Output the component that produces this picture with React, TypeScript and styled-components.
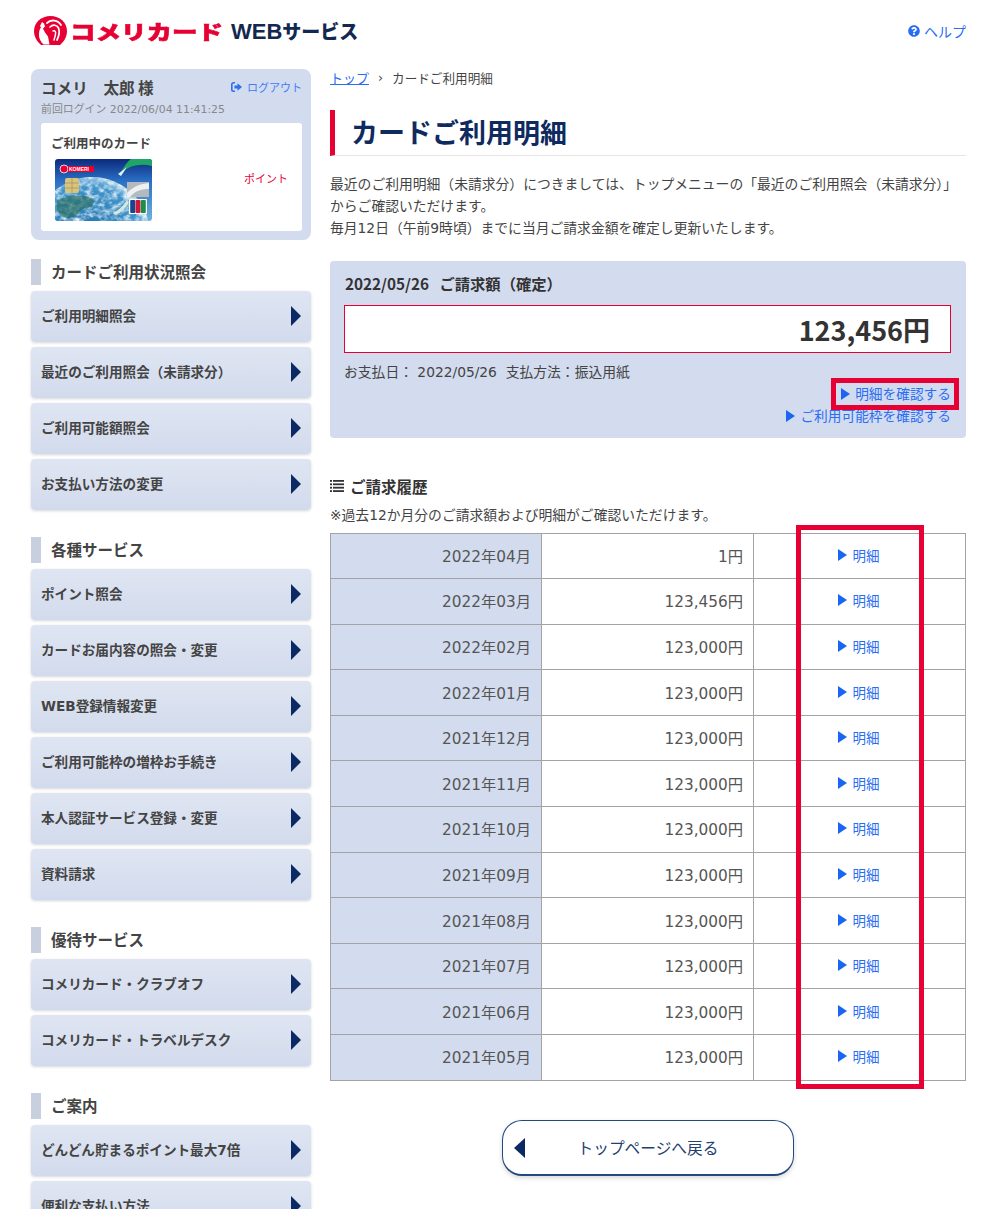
import { createGlobalStyle, styled } from 'styled-components';
import { FaQuestionCircle } from 'react-icons/fa';

const GlobalStyle = createGlobalStyle`
  html, body {
    margin: 0;
    padding: 0;
    background: #fff;
    color: #444;
    font-family: "DejaVu Sans", "Noto Sans CJK JP", sans-serif;
    font-size: 13px;
  }
  * {
    box-sizing: border-box;
  }
`;

const Page = styled.div`
  position: relative;
  width: 1000px;
  height: 1209px;
  overflow: hidden;
  padding: 0 34px 0 31px;
`;

const Header = styled.header`
  display: flex;
  align-items: center;
  justify-content: space-between;
  height: 69px;
  padding: 0 0 7px 3px;
`;

const Logo = styled.div`
  display: flex;
  align-items: center;
  font-family: "Noto Sans CJK JP", sans-serif;
`;

const LogoMain = styled.span`
  display: inline-block;
  margin-left: 3px;
  color: #e60033;
  font-size: 25.500px;
  font-weight: 900;
  line-height: 32px;
  -webkit-text-stroke: 0.7px #e60033;
  transform: scaleY(0.78);
`;

const LogoSub = styled.span`
  margin-left: 8px;
  color: #14284f;
  font-family: "Liberation Sans", sans-serif;
  font-size: 22px;
  font-weight: 700;
  line-height: 32px;
`;

const LogoKana = styled.span`
  font-family: "Noto Sans CJK JP", sans-serif;
  font-size: 19px;
  font-weight: 900;
`;

const HelpLink = styled.a`
  display: flex;
  align-items: center;
  gap: 4px;
  color: #2a6df5;
  font-size: 14px;
  svg {
    font-size: 12px;
  }
`;

const Columns = styled.div`
  display: grid;
  grid-template-columns: 280px 636px;
  gap: 19px;
  align-items: start;
`;

const Sidebar = styled.aside`
  display: flex;
  flex-direction: column;
`;

const UserBox = styled.div`
  height: 171px;
  margin-bottom: 19px;
  padding: 8px 9px 9px 10px;
  background: #d3dcee;
  border-radius: 8px;
`;

const UserRow = styled.div`
  display: flex;
  align-items: center;
  justify-content: space-between;
  height: 20px;
`;

const UserName = styled.span`
  font-family: "Noto Sans CJK JP", sans-serif;
  font-size: 15.600px;
  font-weight: 700;
  color: #444;
  white-space: pre;
`;

const Logout = styled.a`
  display: flex;
  align-items: center;
  gap: 5px;
  color: #3f7cf6;
  font-size: 11px;
`;

const LastLogin = styled.div`
  margin-top: 5px;
  color: #888;
  font-size: 10.900px;
  line-height: 16px;
`;

const CardPanel = styled.div`
  height: 108px;
  margin-top: 5px;
  padding: 12px 10px;
  background: #fff;
  border-radius: 3px;
`;

const CardTitle = styled.div`
  color: #444;
  font-size: 12.500px;
  font-weight: 700;
  line-height: 17px;
`;

const CardRow = styled.div`
  display: flex;
  align-items: center;
  justify-content: space-between;
  margin-top: 7px;
  padding: 0 4px;
`;

const Points = styled.span`
  margin-top: -25px;
  color: #e60033;
  font-size: 11px;
  font-weight: 400;
`;

const Section = styled.section`
  margin-bottom: 27.500px;
`;

const SectionTitle = styled.h2`
  display: flex;
  align-items: center;
  height: 26px;
  margin: 0 0 5.500px;
  padding: 0 0 2px 10px;
  border-left: 10px solid #c8cfde;
  color: #444;
  font-size: 15.500px;
  font-weight: 700;
`;

const NavList = styled.div`
  display: flex;
  flex-direction: column;
  gap: 5px;
`;

const NavItem = styled.a`
  display: flex;
  align-items: center;
  justify-content: space-between;
  height: 51px;
  padding: 0 10px 2px;
  background: linear-gradient(#dfe5f2, #d2dbed);
  border-radius: 4px;
  box-shadow: 0 1px 3px rgba(0, 0, 0, 0.16);
  color: #444;
  font-size: 13.600px;
  font-weight: 700;
`;

const NavArrow = styled.span`
  width: 0;
  height: 0;
  margin-top: 2px;
  border-left: 10px solid #0b2a63;
  border-top: 10px solid transparent;
  border-bottom: 10px solid transparent;
`;

const Main = styled.main`
  display: flex;
  flex-direction: column;
`;

const Breadcrumb = styled.nav`
  display: flex;
  align-items: center;
  gap: 9px;
  height: 20px;
  margin-top: -2px;
  color: #444;
  font-size: 12.600px;
  a {
    color: #2a6df5;
    text-decoration: underline;
    font-size: 13px;
  }
`;

const PageTitle = styled.h1`
  display: flex;
  align-items: center;
  height: 46px;
  margin: 23px 0 0;
  padding: 0 0 2px 16px;
  border-left: 5px solid #e60033;
  border-bottom: 1px solid #e5e5e5;
  color: #0f2a5f;
  font-family: "Noto Sans CJK JP", sans-serif;
  font-size: 27px;
  font-weight: 700;
`;

const Intro = styled.p`
  margin: 17px 0 0;
  color: #444;
  font-size: 13.800px;
  line-height: 22px;
`;

const BillBox = styled.div`
  display: flex;
  flex-direction: column;
  height: 177px;
  margin-top: 21.500px;
  padding: 12px 15px 12px 14px;
  background: #d3dcee;
  border-radius: 4px;
`;

const BillTitle = styled.div`
  padding-left: 1px;
  color: #333;
  font-family: "Noto Sans CJK JP", sans-serif;
  font-size: 15.300px;
  font-weight: 700;
  line-height: 20px;
  white-space: pre;
`;

const Amount = styled.div`
  height: 48px;
  margin-top: 12px;
  padding-right: 20px;
  background: #fff;
  border: 1px solid #e60033;
  color: #333;
  font-family: "Noto Sans CJK JP", sans-serif;
  font-size: 27px;
  font-weight: 700;
  line-height: 48px;
  text-align: right;
`;

const PayInfo = styled.div`
  margin-top: 10px;
  color: #444;
  font-size: 13.800px;
  line-height: 18px;
  white-space: pre;
`;

const BillLink = styled.a`
  display: flex;
  align-items: center;
  justify-content: flex-end;
  gap: 5px;
  margin-top: 4px;
  color: #2a6df5;
  font-size: 13.700px;
  line-height: 18px;
`;

const LinkArrow = styled.span`
  width: 0;
  height: 0;
  border-left: 9px solid #1a66f2;
  border-top: 6px solid transparent;
  border-bottom: 6px solid transparent;
`;

const HistoryTitle = styled.h3`
  display: flex;
  align-items: center;
  gap: 6px;
  height: 20px;
  margin: 38px 0 0;
  color: #333;
  font-family: "Noto Sans CJK JP", sans-serif;
  font-size: 15.500px;
  font-weight: 700;
`;

const Note = styled.p`
  margin: 10px 0 0;
  color: #444;
  font-size: 13.800px;
  line-height: 18px;
`;

const HistoryTable = styled.table`
  width: 636px;
  margin-top: 9px;
  border-collapse: collapse;
  table-layout: fixed;
`;

const Row = styled.tr`
  height: 45.600px;
`;

const MonthCell = styled.td`
  width: 211px;
  padding: 0 10px 2px;
  background: #d3dcee;
  border: 1px solid #a3a3a3;
  color: #555;
  font-size: 15.300px;
  text-align: right;
`;

const PriceCell = styled.td`
  width: 212px;
  padding: 0 10px 2px;
  border: 1px solid #a3a3a3;
  color: #555;
  font-size: 15.300px;
  text-align: right;
`;

const DetailCell = styled.td`
  border: 1px solid #a3a3a3;
`;

const DetailLink = styled.a`
  display: flex;
  align-items: center;
  justify-content: center;
  gap: 6px;
  margin: -2px 0 0 -2px;
  color: #2a6df5;
  font-size: 13.500px;
`;

const BackButton = styled.a`
  position: relative;
  display: flex;
  align-items: center;
  justify-content: center;
  width: 292px;
  height: 56px;
  margin: 39px 0 0 172px;
  background: #fff;
  border: 1px solid #23477f;
  border-bottom-width: 2px;
  border-radius: 20px;
  box-shadow: 0 2px 5px rgba(0, 0, 0, 0.16);
  color: #23406f;
  font-size: 15.700px;
`;

const BackArrow = styled.span`
  position: absolute;
  left: 11px;
  top: 17px;
  width: 0;
  height: 0;
  border-right: 11px solid #0b2a63;
  border-top: 10px solid transparent;
  border-bottom: 10px solid transparent;
`;

const Highlight = styled.div<{ $x: number; $y: number; $w: number; $h: number }>`
  position: absolute;
  left: ${(p) => p.$x}px;
  top: ${(p) => p.$y}px;
  width: ${(p) => p.$w}px;
  height: ${(p) => p.$h}px;
  border: 5px solid #e60033;
  pointer-events: none;
`;

const LogoMark = () => (
  <svg width="33" height="30" viewBox="0 0 33 30">
    <path d="M16.500 0C7.400 0 0 6.500 0 15c0 5.500 2.800 10.500 7 14h19c4.200-3.500 7-8.500 7-14C33 6.500 25.600 0 16.500 0z" fill="#e60033" />
    <path d="M8 6l2 1.500 1 3-2 2 2 4 3 4 1.500 8H9.500c-3-3-5-6.500-4.500-11 .2-3 1-5 2-6L6 10z" fill="#fff" />
    <g fill="none" stroke="#fff" strokeLinecap="round">
      <path d="M13 7c4-4 11-3 14 2" strokeWidth="1.800" />
      <path d="M16 11c3-3 7-2 8.500 1 1.500 4 .5 8-1.500 12" strokeWidth="1.700" />
      <path d="M19 15c2-1 3 1 2.500 3-.3 2-.8 4-1.500 6" strokeWidth="1.500" />
    </g>
  </svg>
);

const LogoutIcon = () => (
  <svg width="11" height="10" viewBox="0 0 11 10">
    <path d="M4 .8H2.500A1.700 1.700 0 0 0 .8 2.500v5A1.700 1.700 0 0 0 2.500 9.200H4" fill="none" stroke="#2f6ff0" strokeWidth="1.600" />
    <path d="M3.500 3.500h3V1.200L11 5 6.500 8.800V6.500h-3z" fill="#2f6ff0" />
  </svg>
);

const ListIcon = () => (
  <svg width="14" height="12" viewBox="0 0 14 12" fill="#333">
    <rect x="0" y="0" width="2" height="1.800" />
    <rect x="3" y="0" width="11" height="1.800" />
    <rect x="0" y="3.400" width="2" height="1.800" />
    <rect x="3" y="3.400" width="11" height="1.800" />
    <rect x="0" y="6.800" width="2" height="1.800" />
    <rect x="3" y="6.800" width="11" height="1.800" />
    <rect x="0" y="10.200" width="2" height="1.800" />
    <rect x="3" y="10.200" width="11" height="1.800" />
  </svg>
);

const CardImage = () => (
  <svg width="97" height="62" viewBox="0 0 97 62">
    <defs>
      <linearGradient id="cardSky" x1="0" y1="0" x2="0" y2="1">
        <stop offset="0" stopColor="#0b2a7c" />
        <stop offset="0.35" stopColor="#2a6fc4" />
        <stop offset="1" stopColor="#6fb3dd" />
      </linearGradient>
      <radialGradient id="cardGlobe" cx="0.45" cy="0.55" r="0.6">
        <stop offset="0" stopColor="#1d6ea8" />
        <stop offset="0.8" stopColor="#3f94cc" />
        <stop offset="1" stopColor="#d7ecf5" />
      </radialGradient>
      <filter id="cardClouds" x="0" y="0" width="100%" height="100%">
        <feTurbulence type="fractalNoise" baseFrequency="0.16 0.22" numOctaves="3" seed="7" />
        <feColorMatrix values="0 0 0 0 1 0 0 0 0 1 0 0 0 0 1 1.900 0 0 0 -0.720" />
        <feComposite in2="SourceGraphic" operator="in" />
      </filter>
      <clipPath id="cardClip">
        <rect width="97" height="62" rx="3" />
      </clipPath>
    </defs>
    <g clipPath="url(#cardClip)">
      <rect width="97" height="62" fill="url(#cardSky)" />
      <path d="M66 13C70 6 73 2 76 0h21v7C86 4 76 6 66 13z" fill="#1fa565" />
      <path d="M63 15l9-7-6 9z" fill="#dff3fb" />
      <circle cx="37" cy="76" r="58" fill="url(#cardGlobe)" />
      <circle cx="37" cy="76" r="58" fill="#fff" filter="url(#cardClouds)" />
      <path d="M2 42c10-6 24-7 34-3 6 3 2 9-5 10-9 2-6 9-18 10-8 0-13-9-11-17z" fill="#2b6f5f" opacity="0.65" />
      <path d="M58 54c6-3 10-7 14-13l2 2c-3 6-8 11-14 13z" fill="#d4e9dc" />
      <rect x="10" y="19" width="14" height="15" rx="2" fill="#d9c47f" />
      <path d="M10 24h14M10 29h14M17 19v15" stroke="#a58f4f" strokeWidth="0.700" />
      <rect x="72" y="23" width="22" height="15" fill="#b4b9bd" />
      <path d="M72 34c7-7 13-9 22-10v6c-8 0-14 2-19 8h-3z" fill="#eef1f3" />
      <rect x="74" y="40" width="18" height="15" rx="1" fill="#fff" />
      <rect x="75.200" y="41" width="5" height="13" rx="1" fill="#15478f" />
      <rect x="80.500" y="41" width="5" height="13" rx="1" fill="#d3163c" />
      <rect x="85.800" y="41" width="5" height="13" rx="1" fill="#1b8f43" />
      <circle cx="9" cy="10" r="4" fill="#e60033" stroke="#fff" strokeWidth="0.800" />
      <rect x="13" y="7" width="26" height="6" fill="#e60033" />
      <text x="14" y="11.800" fontSize="5" fontWeight="700" fill="#fff" fontFamily="Liberation Sans, sans-serif">
        KOMERI
      </text>
    </g>
  </svg>
);

const NAV_SECTIONS = [
  {
    title: 'カードご利用状況照会',
    items: ['ご利用明細照会', '最近のご利用照会（未請求分）', 'ご利用可能額照会', 'お支払い方法の変更'],
  },
  {
    title: '各種サービス',
    items: [
      'ポイント照会',
      'カードお届内容の照会・変更',
      'WEB登録情報変更',
      'ご利用可能枠の増枠お手続き',
      '本人認証サービス登録・変更',
      '資料請求',
    ],
  },
  {
    title: '優待サービス',
    items: ['コメリカード・クラブオフ', 'コメリカード・トラベルデスク'],
  },
  {
    title: 'ご案内',
    items: ['どんどん貯まるポイント最大7倍', '便利な支払い方法'],
  },
];

const HISTORY = [
  ['2022年04月', '1円'],
  ['2022年03月', '123,456円'],
  ['2022年02月', '123,000円'],
  ['2022年01月', '123,000円'],
  ['2021年12月', '123,000円'],
  ['2021年11月', '123,000円'],
  ['2021年10月', '123,000円'],
  ['2021年09月', '123,000円'],
  ['2021年08月', '123,000円'],
  ['2021年07月', '123,000円'],
  ['2021年06月', '123,000円'],
  ['2021年05月', '123,000円'],
];

const App = () => {
  return (
    <Page>
      <GlobalStyle />
      <Header>
        <Logo>
          <LogoMark />
          <LogoMain>コメリカード</LogoMain>
          <LogoSub>
            WEB<LogoKana>サービス</LogoKana>
          </LogoSub>
        </Logo>
        <HelpLink>
          <FaQuestionCircle />
          ヘルプ
        </HelpLink>
      </Header>
      <Columns>
        <Sidebar>
          <UserBox>
            <UserRow>
              <UserName>コメリ　太郎 様</UserName>
              <Logout>
                <LogoutIcon />
                ログアウト
              </Logout>
            </UserRow>
            <LastLogin>前回ログイン 2022/06/04 11:41:25</LastLogin>
            <CardPanel>
              <CardTitle>ご利用中のカード</CardTitle>
              <CardRow>
                <CardImage />
                <Points>ポイント</Points>
              </CardRow>
            </CardPanel>
          </UserBox>
          {NAV_SECTIONS.map((section) => (
            <Section key={section.title}>
              <SectionTitle>{section.title}</SectionTitle>
              <NavList>
                {section.items.map((item) => (
                  <NavItem key={item}>
                    {item}
                    <NavArrow />
                  </NavItem>
                ))}
              </NavList>
            </Section>
          ))}
        </Sidebar>
        <Main>
          <Breadcrumb>
            <a>トップ</a>
            <span>›</span>
            <span>カードご利用明細</span>
          </Breadcrumb>
          <PageTitle>カードご利用明細</PageTitle>
          <Intro>
            最近のご利用明細（未請求分）につきましては、トップメニューの「最近のご利用照会（未請求分）」
            <br />
            からご確認いただけます。
            <br />
            毎月12日（午前9時頃）までに当月ご請求金額を確定し更新いたします。
          </Intro>
          <BillBox>
            <BillTitle>2022/05/26   ご請求額（確定）</BillTitle>
            <Amount>123,456円</Amount>
            <PayInfo>お支払日： 2022/05/26  支払方法：振込用紙</PayInfo>
            <BillLink>
              <LinkArrow />
              明細を確認する
            </BillLink>
            <BillLink>
              <LinkArrow />
              ご利用可能枠を確認する
            </BillLink>
          </BillBox>
          <HistoryTitle>
            <ListIcon />
            ご請求履歴
          </HistoryTitle>
          <Note>※過去12か月分のご請求額および明細がご確認いただけます。</Note>
          <HistoryTable>
            <tbody>
              {HISTORY.map(([month, price]) => (
                <Row key={month}>
                  <MonthCell>{month}</MonthCell>
                  <PriceCell>{price}</PriceCell>
                  <DetailCell>
                    <DetailLink>
                      <LinkArrow />
                      明細
                    </DetailLink>
                  </DetailCell>
                </Row>
              ))}
            </tbody>
          </HistoryTable>
          <BackButton>
            <BackArrow />
            トップページへ戻る
          </BackButton>
        </Main>
      </Columns>
      <Highlight $x={831} $y={378} $w={128} $h={32} />
      <Highlight $x={796} $y={525} $w={128} $h={564} />
    </Page>
  );
};

export default App;
